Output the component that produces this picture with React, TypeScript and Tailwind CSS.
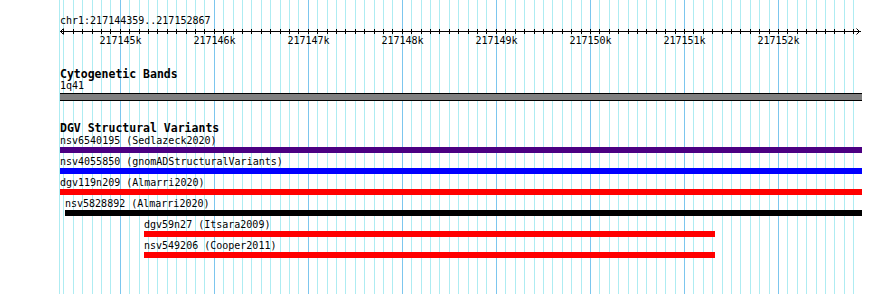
const START = 217144359;
const END = 217152867;
const LEFT = 60;
const SCALE = 800 / (END - START);

const xOf = (bp: number) => Math.floor(LEFT + (bp - START) * SCALE);

interface Variant {
  label: string;
  color: string;
  left: number;
  right: number;
}

const variants: Variant[] = [
  { label: 'nsv6540195 (Sedlazeck2020)', color: 'bg-[#4b0082]', left: 60, right: 862 },
  { label: 'nsv4055850 (gnomADStructuralVariants)', color: 'bg-[#0000ff]', left: 60, right: 862 },
  { label: 'dgv119n209 (Almarri2020)', color: 'bg-[#ff0000]', left: 60, right: 862 },
  { label: 'nsv5828892 (Almarri2020)', color: 'bg-black', left: 65, right: 862 },
  { label: 'dgv59n27 (Itsara2009)', color: 'bg-[#ff0000]', left: 144, right: 715 },
  { label: 'nsv549206 (Cooper2011)', color: 'bg-[#ff0000]', left: 144, right: 715 },
];

// every 100bp inside the view
const ticks: number[] = [];
for (let bp = Math.ceil(START / 100) * 100; bp <= END; bp += 100) ticks.push(bp);

function Grid() {
  return (
    <svg className="absolute inset-0" width={890} height={294} shapeRendering="crispEdges">
      {/* edge line at view start */}
      <line x1={59.5} x2={59.5} y1={0} y2={294} stroke="#aeecf2" strokeWidth={1} />
      {ticks.map((bp) => (
        <line
          key={bp}
          x1={xOf(bp) + 0.5}
          x2={xOf(bp) + 0.5}
          y1={0}
          y2={294}
          stroke={bp % 1000 === 0 ? '#7cc6ee' : '#aeecf2'}
          strokeWidth={1}
        />
      ))}
    </svg>
  );
}

function Ruler() {
  return (
    <svg className="block" width={890} height={20}>
      <g shapeRendering="crispEdges" stroke="#000" strokeWidth={1}>
        <line x1={60} x2={861} y1={5.5} y2={5.5} />
        {ticks.map((bp) => (
          <line key={bp} x1={xOf(bp) + 0.5} x2={xOf(bp) + 0.5} y1={3} y2={8} />
        ))}
      </g>
      <polyline points="63.5,2.5 60.5,5.5 63.5,8.5" fill="none" stroke="#000" strokeWidth={1} />
      <polyline points="856.5,2.5 859.5,5.5 856.5,8.5" fill="none" stroke="#000" strokeWidth={1} />
      {ticks
        .filter((bp) => bp % 1000 === 0)
        .map((bp) => (
          <text
            key={bp}
            x={xOf(bp) + 0.5}
            y={18}
            textAnchor="middle"
            fontSize={10}
            fontFamily="'DejaVu Sans Mono', monospace"
            fill="#000"
          >
            {bp / 1000}k
          </text>
        ))}
    </svg>
  );
}

export default function App() {
  return (
    <div className="relative w-[890px] h-[294px] overflow-hidden bg-white font-['DejaVu_Sans_Mono',monospace] text-[10px] text-black">
      <Grid />
      <div className="relative pt-[16px]">
        <div className="pl-[60px] h-[10px] leading-[10px]">chr1:217144359..217152867</div>
        <Ruler />

        {/* Cytogenetic bands */}
        <div className="mt-[22px] pl-[60px] h-[12px] leading-[12px] text-[11.5px] font-bold">Cytogenetic Bands</div>
        <div className="mt-[1px] pl-[60px] h-[10px] leading-[10px]">1q41</div>
        <div className="mt-[2px] ml-[60px] w-[802px] h-[8px] border-y border-black bg-[#808080]" />

        {/* DGV */}
        <div className="mt-[21px] pl-[60px] h-[12px] leading-[12px] text-[11.5px] font-bold">DGV Structural Variants</div>
        <div className="mt-[2px] flex flex-col">
          {variants.map((v) => (
            <div key={v.label} className="h-[21px]">
              <div className="h-[10px] leading-[10px] whitespace-pre" style={{ paddingLeft: v.left }}>
                {v.label}
              </div>
              <div
                className={`mt-[1px] h-[6px] ${v.color}`}
                style={{ marginLeft: v.left, width: v.right - v.left }}
              />
            </div>
          ))}
        </div>
      </div>
    </div>
  );
}
